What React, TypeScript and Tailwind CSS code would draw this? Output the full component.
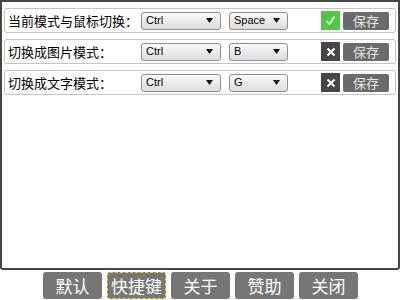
const rows = [
  { label: '当前模式与鼠标切换：', mod: 'Ctrl', key: 'Space', ok: true },
  { label: '切换成图片模式：', mod: 'Ctrl', key: 'B', ok: false },
  { label: '切换成文字模式：', mod: 'Ctrl', key: 'G', ok: false },
]

const tabs = ['默认', '快捷键', '关于', '赞助', '关闭']

function Select({ value, width }: { value: string; width: string }) {
  return (
    <div
      className={`${width} h-[18px] flex items-center justify-between pl-[4px] pr-[3px] rounded-[3px] border border-[#8e8e8e] bg-gradient-to-b from-[#fbfbfb] to-[#dcdcdc] text-[11px] text-black font-['Liberation_Sans',sans-serif]`}
    >
      <span>{value}</span>
      <svg width="7" height="5" viewBox="0 0 7 5" className="mr-[4px]">
        <path d="M0 0 H7 L3.5 5 Z" fill="#111" />
      </svg>
    </div>
  )
}

export default function App() {
  return (
    <div className="w-[400px] h-[300px] bg-white flex flex-col font-['Noto_Sans_CJK_SC',sans-serif]">
      <div className="h-[270px] border-2 border-[#464646] rounded-b-[3px] flex flex-col gap-[6px] px-[2px] pt-[6px]">
        {rows.map((r) => (
          <div
            key={r.label}
            className="h-[25px] flex items-center border border-[#c4c4c4] rounded-[3px] pl-[3px] pr-[6px]"
          >
            <span className="w-[133px] text-[13px] leading-none text-black">{r.label}</span>
            <Select value={r.mod} width="w-[80px]" />
            <div className="w-[8px]" />
            <Select value={r.key} width="w-[59px]" />
            <div className="flex-1" />
            {r.ok ? (
              <div className="w-[19px] h-[19px] bg-[#52c746] flex items-center justify-center">
                <svg width="11" height="11" viewBox="0 0 11 11">
                  <path d="M1.5 6 L4.5 9 L9.5 1.5" fill="none" stroke="#e8ffe0" strokeWidth="1.6" />
                </svg>
              </div>
            ) : (
              <div className="w-[19px] h-[19px] bg-[#474747] flex items-center justify-center">
                <svg width="10" height="10" viewBox="0 0 10 10">
                  <path d="M1.5 1.5 L8.5 8.5 M8.5 1.5 L1.5 8.5" stroke="#ffffff" strokeWidth="2" />
                </svg>
              </div>
            )}
            <div className="ml-[3px] w-[46px] h-[18px] bg-[#6b6b6b] rounded-[2px] text-[#e6e6e6] text-[13px] flex items-center justify-center leading-none">
              保存
            </div>
          </div>
        ))}
      </div>
      <div className="flex gap-[5px] pl-[43px] pt-[2px]">
        {tabs.map((t) => (
          <div
            key={t}
            className={`w-[59px] h-[27px] rounded-[3px] bg-[#767676] text-white text-[17px] flex items-center justify-center leading-none ${
              t === '快捷键' ? 'outline outline-1 outline-dashed outline-[#e8e000] -outline-offset-1' : ''
            }`}
          >
            {t}
          </div>
        ))}
      </div>
    </div>
  )
}
